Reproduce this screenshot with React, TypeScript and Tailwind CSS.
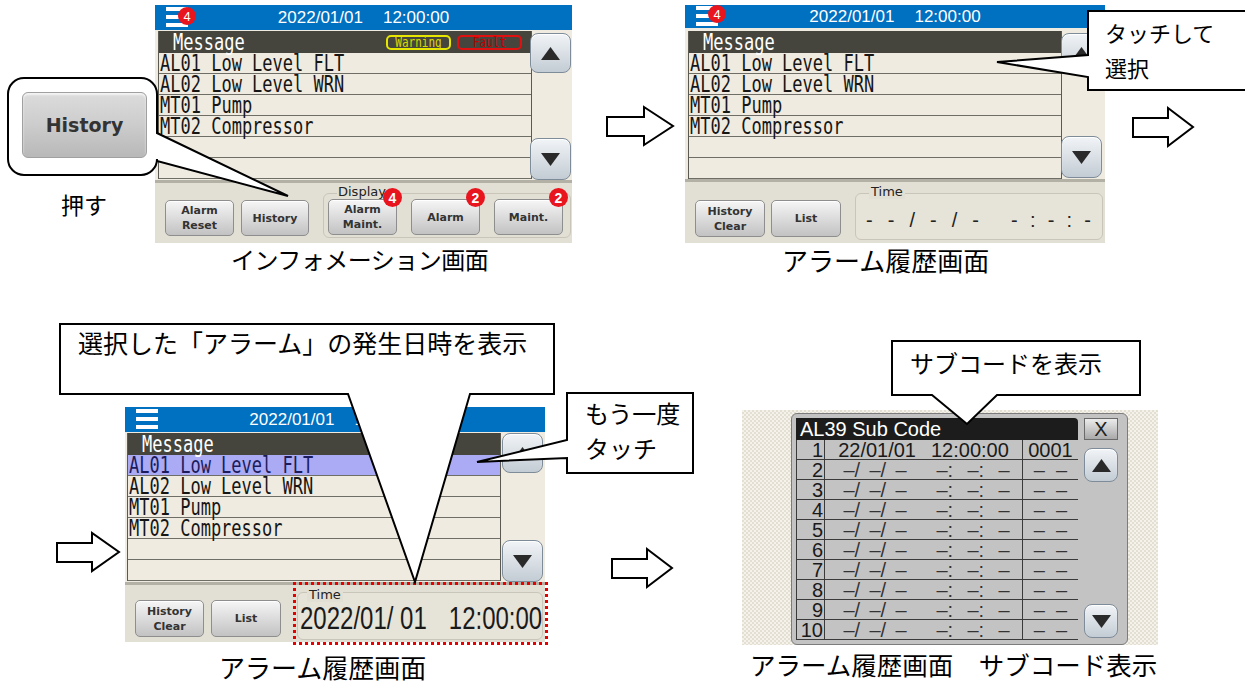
import React from "react";

const MSGS = ["AL01 Low Level FLT", "AL02 Low Level WRN", "MT01 Pump", "MT02 Compressor", "", ""];
const JP = "font-['Noto_Sans_CJK_JP',sans-serif]";

function Badge({ n, small, className = "" }: { n: string; small?: boolean; className?: string }) {
  return (
    <div
      className={`absolute flex items-center justify-center rounded-full bg-[#e8141e] font-['Liberation_Sans',sans-serif] leading-none text-white ${
        small ? "h-[18px] w-[18px] text-[13px]" : "h-[19px] w-[19px] text-[14px]"
      } ${className}`}
    >
      {n}
    </div>
  );
}

function Hamburger({ className = "" }: { className?: string }) {
  return (
    <div className={`absolute flex w-[22px] flex-col gap-[4px] ${className}`}>
      <div className="h-[4px] bg-white" />
      <div className="h-[4px] bg-white" />
      <div className="h-[4px] bg-white" />
    </div>
  );
}

function ScrollBtn({ up, className = "" }: { up?: boolean; className?: string }) {
  return (
    <div
      className={`flex shrink-0 items-center justify-center rounded-[8px] border border-[#7e8c99] bg-linear-to-b from-[#f1f4f7] to-[#c3ccd4] shadow-[inset_0_1px_1px_#fff] ${className}`}
    >
      <svg viewBox="0 0 19 13" className="h-[13px] w-[19px]">
        <path d={up ? "M9.5 0 L19 13 H0 Z" : "M0 0 H19 L9.5 13 Z"} fill="#2a2a2a" />
      </svg>
    </div>
  );
}

function Btn({ lines, className = "", badge }: { lines: string[]; className?: string; badge?: string }) {
  return (
    <div
      className={`relative flex shrink-0 flex-col items-center justify-center rounded-[5px] border border-[#8e8e8e] bg-linear-to-b from-[#f6f6f6] via-[#dcdcdc] to-[#c2c2c2] font-['DejaVu_Sans',sans-serif] text-[11px] font-bold leading-[15px] text-[#333] shadow-[inset_0_1px_0_#fff] ${className}`}
    >
      {lines.map((l) => (
        <span key={l}>{l}</span>
      ))}
      {badge && <Badge n={badge} className="right-[-6px] top-[-12px]" />}
    </div>
  );
}

function MessageList({ selected, tags }: { selected?: number; tags?: boolean }) {
  return (
    <div className="flex w-[374px] flex-col border-x border-[#5a5a52] font-['DejaVu_Sans_Mono',monospace]">
      <div className="flex h-[22px] items-center justify-between bg-[#46453d] pl-[14px] pr-[9px] text-[17px] text-white">
        <span className="inline-block scale-y-[1.3] leading-none">Message</span>
        {tags && (
          <div className="flex gap-[6px] text-[11px] leading-none">
            <span className="flex h-[15px] w-[65px] items-center justify-center rounded-[5px] border-2 border-[#e6e600] text-[#d8d800]">
              <span className="inline-block scale-y-[1.3]">Warning</span>
            </span>
            <span className="flex h-[15px] w-[65px] items-center justify-center rounded-[5px] border-2 border-[#e01010] text-[#c00000]">
              <span className="inline-block scale-y-[1.3]">Fault</span>
            </span>
          </div>
        )}
      </div>
      {MSGS.map((m, i) => (
        <div
          key={i}
          className={`flex h-[21px] items-center border-b border-[#6e6d66] pl-[1px] text-[17px] ${
            i === selected ? "bg-[#aaaaf5] text-[#1c1c5c]" : "bg-[#efebe0] text-[#161616]"
          }`}
        >
          <span className="inline-block scale-y-[1.35] whitespace-pre leading-none">{m}</span>
        </div>
      ))}
    </div>
  );
}

function Dashes({ chars, className = "" }: { chars: string[]; className?: string }) {
  return (
    <div className={`flex justify-between ${className}`}>
      {chars.map((c, i) => (
        <span key={i}>{c}</span>
      ))}
    </div>
  );
}

function SubRow({ n, first }: { n: number; first?: boolean }) {
  return (
    <div className="flex h-[20px] items-center border-b border-[#3a3a3a] text-[20px] leading-none text-[#1a1a1a]">
      <div className="flex h-full w-[28px] items-center justify-end border-r border-[#3a3a3a] pr-[1px]">{n}</div>
      <div className="flex h-full w-[198px] items-center justify-center border-r border-[#3a3a3a]">
        {first ? (
          <div className="flex gap-[15px]">
            <span>22/01/01</span>
            <span>12:00:00</span>
          </div>
        ) : (
          <div className="flex gap-[30px] pl-[6px] text-[#333]">
            <Dashes chars={["–/", "–/", "–"]} className="w-[63px]" />
            <Dashes chars={["–:", "–:", "–"]} className="w-[73px]" />
          </div>
        )}
      </div>
      <div className="flex h-full flex-1 items-center justify-center">
        {first ? <span>0001</span> : <span className="whitespace-pre text-[#333]">–  –</span>}
      </div>
    </div>
  );
}

function arrow(x: number, y: number, w: number, hx: number) {
  return `M${x} ${y + 10} H${hx} V${y} L${x + w} ${y + 19} L${hx} ${y + 38} V${y + 29} H${x} Z`;
}

export default function App() {
  return (
    <div className="relative h-[686px] w-[1245px] overflow-hidden bg-white font-['Liberation_Sans','Noto_Sans_CJK_JP',sans-serif] text-black">
      {/* information screen */}
      <div className="absolute left-[155px] top-[5px] flex h-[238px] w-[417px] flex-col bg-[#efebe0]">
        <div className="relative flex h-[25px] shrink-0 items-center justify-center bg-[#0070c0] text-[17px] text-white">
          <Hamburger className="left-[11px] top-[2px]" />
          <Badge n="4" small className="left-[23px] top-[2px]" />
          <div className="flex gap-[20px] leading-none">
            <span>2022/01/01</span>
            <span>12:00:00</span>
          </div>
        </div>
        <div className="flex h-[150px] shrink-0">
          <div className="pl-[3px] pt-[1px]">
            <MessageList tags />
          </div>
          <div className="flex flex-1 flex-col justify-between pt-[3px]">
            <ScrollBtn up className="-ml-[2px] h-[40px] w-[41px]" />
            <ScrollBtn className="-ml-[2px] h-[42px] w-[41px]" />
          </div>
        </div>
        <div className="flex flex-1 items-start gap-[7px] border-t-[3px] border-[#b3b0a5] bg-[#e2dfd4] pl-[10px]">
          <Btn lines={["Alarm", "Reset"]} className="mt-[17px] h-[36px] w-[69px]" />
          <Btn lines={["History"]} className="mt-[17px] h-[36px] w-[68px]" />
          <div className="relative ml-[7px] mt-[10px] flex h-[45px] w-[248px] items-start gap-[14px] rounded-[6px] border border-[#c9c5b9] pl-[4px] pt-[5px]">
            <span className="absolute left-[13px] top-[-10px] bg-[#e2dfd4] px-[1px] font-['DejaVu_Sans',sans-serif] text-[13px] leading-[15px] text-[#222]">
              Display
            </span>
            <Btn lines={["Alarm", "Maint."]} badge="4" className="h-[36px] w-[69px]" />
            <Btn lines={["Alarm"]} badge="2" className="h-[36px] w-[69px]" />
            <Btn lines={["Maint."]} badge="2" className="h-[36px] w-[69px]" />
          </div>
        </div>
      </div>

      {/* alarm history screen */}
      <div className="absolute left-[685px] top-[5px] flex h-[238px] w-[420px] flex-col bg-[#efebe0]">
        <div className="relative flex h-[23px] shrink-0 items-center justify-center bg-[#0070c0] text-[17px] text-white">
          <Hamburger className="left-[11px] top-[1px]" />
          <Badge n="4" small className="left-[23px] top-[0px]" />
          <div className="flex gap-[20px] leading-none">
            <span>2022/01/01</span>
            <span>12:00:00</span>
          </div>
        </div>
        <div className="flex h-[151px] shrink-0">
          <div className="pl-[3px] pt-[3px]">
            <MessageList />
          </div>
          <div className="flex flex-1 flex-col justify-between pb-[1px] pt-[5px]">
            <ScrollBtn up className="-ml-[1px] h-[40px] w-[41px]" />
            <ScrollBtn className="-ml-[1px] h-[42px] w-[41px]" />
          </div>
        </div>
        <div className="flex flex-1 items-start gap-[6px] border-t-[3px] border-[#b3b0a5] bg-[#e2dfd4] pl-[10px]">
          <Btn lines={["History", "Clear"]} className="mt-[18px] h-[37px] w-[70px]" />
          <Btn lines={["List"]} className="mt-[18px] h-[37px] w-[70px]" />
          <div className="relative ml-[8px] mt-[11px] flex h-[47px] w-[248px] items-center gap-[32px] rounded-[6px] border border-[#c9c5b9] bg-[#e6e3d9] pl-[10px] pt-[6px] text-[20px] text-[#222]">
            <span className="absolute left-[13px] top-[-10px] bg-[#e2dfd4] px-[2px] font-['DejaVu_Sans',sans-serif] text-[13px] leading-[15px] text-[#222]">
              Time
            </span>
            <Dashes chars={["-", "-", "/", "-", "/", "-"]} className="w-[113px]" />
            <Dashes chars={["-", ":", "-", ":", "-"]} className="w-[80px]" />
          </div>
        </div>
      </div>

      {/* alarm history screen, selected */}
      <div className="absolute left-[125px] top-[407px] flex h-[235px] w-[420px] flex-col bg-[#efebe0]">
        <div className="relative flex h-[25px] shrink-0 items-center justify-center bg-[#0070c0] text-[17px] text-white">
          <Hamburger className="left-[11px] top-[2px]" />
          <div className="flex gap-[20px] leading-none">
            <span>2022/01/01</span>
            <span>12:00:00</span>
          </div>
        </div>
        <div className="flex h-[150px] shrink-0">
          <div className="pl-[2px] pt-[1px]">
            <MessageList selected={0} />
          </div>
          <div className="flex flex-1 flex-col justify-between pt-[1px]">
            <ScrollBtn up className="ml-[1px] h-[40px] w-[41px]" />
            <ScrollBtn className="ml-[1px] h-[42px] w-[41px]" />
          </div>
        </div>
        <div className="flex flex-1 items-start gap-[7px] border-t-[3px] border-[#b3b0a5] bg-[#e2dfd4] pl-[10px]">
          <Btn lines={["History", "Clear"]} className="mt-[15px] h-[37px] w-[69px]" />
          <Btn lines={["List"]} className="mt-[15px] h-[37px] w-[70px]" />
          <div className="relative ml-[9px] mt-[7px] flex h-[48px] w-[246px] items-center gap-[22px] rounded-[6px] border border-[#c9c5b9] bg-[#e6e3d9] pl-[2px] pt-[6px] text-[24px] leading-none text-[#1a1a1a]">
            <span className="absolute left-[9px] top-[-6px] bg-[#e2dfd4] px-[2px] font-['DejaVu_Sans',sans-serif] text-[13px] leading-[15px] text-[#222]">
              Time
            </span>
            <span className="inline-block scale-y-[1.28] whitespace-pre">2022/01/ 01</span>
            <span className="inline-block scale-y-[1.28]">12:00:00</span>
          </div>
        </div>
      </div>
      <div className="absolute left-[293px] top-[582px] h-[63px] w-[255px] border-[3px] border-dotted border-[#e60000]" />

      {/* sub code screen */}
      <div className="absolute left-[742px] top-[410px] h-[235px] w-[416px] bg-[#efece3] bg-[image:repeating-conic-gradient(#e3dfd3_0%_25%,#f4f2eb_0%_50%)] bg-[length:4px_4px] pl-[49px] pt-[3px]">
        <div className="flex h-[232px] w-[337px] gap-[6px] rounded-[6px] border border-[#7c7c7c] bg-[#c3c3c3] p-[4px]">
          <div className="flex w-[282px] flex-col">
            <div className="flex h-[22px] shrink-0 items-center rounded-tr-[4px] bg-[#1c1c1c] pl-[4px] text-[20px] leading-none text-white">
              AL39 Sub Code
            </div>
            <div className="border-l border-[#3a3a3a]">
              {[1, 2, 3, 4, 5, 6, 7, 8, 9, 10].map((n) => (
                <SubRow key={n} n={n} first={n === 1} />
              ))}
            </div>
          </div>
          <div className="flex w-[34px] flex-col">
            <div className="flex h-[22px] shrink-0 items-center justify-center border border-[#6a6a6a] bg-linear-to-b from-[#ececec] to-[#a9a9a9] text-[20px] leading-none text-[#222]">
              X
            </div>
            <ScrollBtn up className="mt-[8px] h-[34px] w-[34px]" />
            <ScrollBtn className="mb-[2px] mt-auto h-[34px] w-[34px]" />
          </div>
        </div>
      </div>

      {/* labels */}
      <div className={`absolute left-[231px] top-[247px] text-[24px] leading-none tracking-[-0.5px] ${JP}`}>インフォメーション画面</div>
      <div className={`absolute left-[782px] top-[247px] text-[26px] leading-none ${JP}`}>アラーム履歴画面</div>
      <div className={`absolute left-[219px] top-[654px] text-[26px] leading-none ${JP}`}>アラーム履歴画面</div>
      <div className={`absolute left-[750px] top-[651px] whitespace-pre text-[25.5px] leading-none ${JP}`}>アラーム履歴画面　サブコード表示</div>
      <div className={`absolute left-[61px] top-[193px] text-[23px] leading-none ${JP}`}>押す</div>

      {/* callouts and arrows */}
      <svg className="absolute left-0 top-0 z-10" width="1245" height="686" viewBox="0 0 1245 686">
        <g fill="#fff" stroke="#000" strokeWidth="2" strokeLinejoin="miter">
          <path d="M24 78 H141 A16 16 0 0 1 157 94 V133 L288 196 L157 161 V159 A16 16 0 0 1 141 175 H24 A16 16 0 0 1 8 159 V94 A16 16 0 0 1 24 78 Z" />
          <path d="M1088 11 H1250 V90 H1088 V77 L997 62 L1088 55 Z" />
          <path d="M60 324 H554 V394 H470 L415 582 L348 394 H60 Z" />
          <path d="M567 393 H693 V473 H567 V458 L477 462 L567 440 Z" />
          <path d="M892 341 H1140 V395 H997 L967 424 L932 395 H892 Z" />
          <path d={arrow(607, 107, 66, 644)} />
          <path d={arrow(1133, 108, 60, 1168)} />
          <path d={arrow(57, 533, 62, 92)} />
          <path d={arrow(612, 549, 60, 647)} />
        </g>
      </svg>

      <div className="absolute left-[22px] top-[92px] z-20 flex h-[66px] w-[125px] items-center justify-center rounded-[6px] border border-[#a0a0a0] bg-linear-to-b from-[#dcdcdc] via-[#cccccc] to-[#b8b8b8] font-['DejaVu_Sans',sans-serif] text-[19px] font-bold text-[#333] shadow-[inset_0_2px_2px_#f4f4f4]">
        History
      </div>
      <div className={`absolute left-[1105px] top-[15px] z-20 text-[22px] leading-[35px] ${JP}`}>
        <div>タッチして</div>
        <div>選択</div>
      </div>
      <div className={`absolute left-[78px] top-[330px] z-20 text-[25px] leading-none ${JP}`}>選択した「アラーム」の発生日時を表示</div>
      <div className={`absolute left-[585px] top-[395px] z-20 text-[24px] leading-[35px] ${JP}`}>
        <div>もう一度</div>
        <div>タッチ</div>
      </div>
      <div className={`absolute left-[910px] top-[346px] z-20 text-[24px] leading-[34px] ${JP}`}>サブコードを表示</div>
    </div>
  );
}
